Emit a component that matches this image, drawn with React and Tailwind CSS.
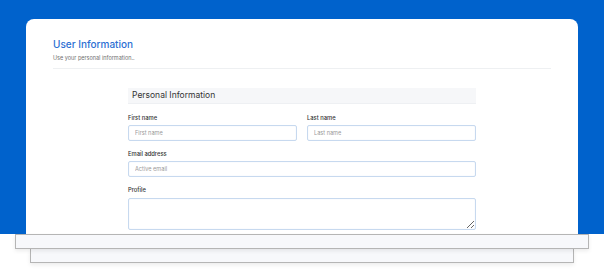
export default function App() {
  const font = { fontFamily: "Inter, 'Noto Sans', sans-serif" };
  const inputCls =
    "block w-full h-[16px] border border-[#c7d9ef] rounded-[2px] px-[6px] text-[5.6px] leading-[8px] text-[#333] placeholder:text-[#9a9a9a] outline-none shadow-[inset_0_0_1px_rgba(120,160,210,0.3)]";
  return (
    <div className="w-[604px] h-[277px] overflow-hidden bg-white leading-none" style={font}>
      <div className="h-[234px] bg-[#0062cc] px-[26px] pt-[19px]">
        <div className="h-full bg-white rounded-t-[8px] overflow-hidden px-[27px] pt-[19px]">
          <div className="text-[10px] leading-[12px] font-medium text-[#2b6fd3]">User Information</div>
          <div className="mt-[5px] text-[5.5px] leading-[7px] text-[#707070] pb-[6px] border-b border-[#eef0f2]">
            Use your personal information..
          </div>
          <div className="w-[348px] mx-auto mt-[19px]">
            <div className="h-[16px] bg-[#f6f7f9] border-b border-[#eef0f3] pl-[4px] flex items-center text-[8.5px] text-[#333]">
              Personal Information
            </div>
            <div className="grid grid-cols-2 gap-x-[10px] mt-[10px]">
              <div>
                <div className="text-[5.8px] leading-[8px] font-medium text-[#333]">First name</div>
                <input className={"mt-[3px] " + inputCls} placeholder="First name" style={font} />
              </div>
              <div>
                <div className="text-[5.8px] leading-[8px] font-medium text-[#333]">Last name</div>
                <input className={"mt-[3px] " + inputCls} placeholder="Last name" style={font} />
              </div>
            </div>
            <div className="mt-[9px]">
              <div className="text-[5.8px] leading-[8px] font-medium text-[#333]">Email address</div>
              <input className={"mt-[3px] " + inputCls} placeholder="Active email" style={font} />
            </div>
            <div className="mt-[9px]">
              <div className="text-[5.8px] leading-[8px] font-medium text-[#333]">Profile</div>
              <textarea
                className="block mt-[4px] w-full h-[32px] border border-[#c7d9ef] rounded-[2px] px-[6px] text-[5.6px] outline-none shadow-[inset_0_0_1px_rgba(120,160,210,0.3)]"
                style={font}
              />
            </div>
          </div>
        </div>
      </div>
      <div className="mx-[15px] h-[15px] bg-[#f7f8fb] border border-[#b5b5b5] shadow-[0_2px_4px_rgba(0,0,0,0.08)] relative z-10" />
      <div className="mx-[30px] h-[14px] bg-[#f7f8fb] border border-t-0 border-[#b5b5b5] shadow-[0_2px_4px_rgba(0,0,0,0.08)]" />
    </div>
  );
}
